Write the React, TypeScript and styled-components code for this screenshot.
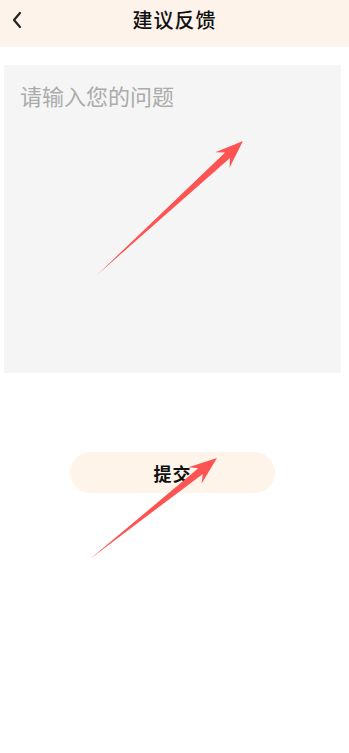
import React from 'react';
import styled, {createGlobalStyle} from 'styled-components';

const GlobalStyle = createGlobalStyle`
  html, body {
    margin: 0;
    padding: 0;
    background: #fff;
    font-family: 'Noto Sans CJK SC', 'Noto Sans', sans-serif;
  }
`;

const Page = styled.div`
  position: relative;
  width: 349px;
  height: 753px;
  background: #fff;
  overflow: hidden;
`;

const Header = styled.div`
  position: relative;
  height: 47px;
  display: flex;
  align-items: center;
  justify-content: center;
  background-color: #fdf3ea;
`;

const BackButton = styled.div`
  position: absolute;
  left: 8px;
  top: 10px;
  width: 18px;
  height: 20px;
  display: flex;
  align-items: center;
  justify-content: center;
`;

const Title = styled.h1`
  margin: 0 0 8px 0;
  font-size: 20px;
  font-weight: 500;
  color: #111;
  letter-spacing: 1px;
`;

const Content = styled.div`
  display: flex;
  flex-direction: column;
  padding: 18px 8px 0 4px;
`;

const Question = styled.textarea`
  box-sizing: border-box;
  width: 100%;
  height: 308px;
  border: none;
  outline: none;
  resize: none;
  padding: 14px 16px;
  background-color: #f5f5f5;
  font-family: 'Noto Sans CJK SC', sans-serif;
  font-size: 22px;
  line-height: 32px;
  color: #333;

  &::placeholder {
    color: #ababab;
  }
`;

const SubmitButton = styled.button`
  align-self: flex-start;
  margin: 79px 0 0 66px;
  width: 205px;
  height: 41px;
  border: none;
  border-radius: 21px;
  background-color: #fef4ea;
  font-family: 'Noto Sans CJK SC', sans-serif;
  font-size: 18px;
  font-weight: 700;
  color: #111;
  letter-spacing: 1px;
`;

const Overlay = styled.svg`
  position: absolute;
  left: 0;
  top: 0;
  pointer-events: none;
`;

type Pt = [number, number];

// annotation arrow: thin tail widening into a barbed head
const arrowPoints = (tail: Pt, tip: Pt) => {
  const dx = tip[0] - tail[0];
  const dy = tip[1] - tail[1];
  const len = Math.hypot(dx, dy);
  const u: Pt = [dx / len, dy / len];
  const n: Pt = [-u[1], u[0]];
  const at = (d: number, w: number): Pt => [
    tip[0] - u[0] * d + n[0] * w,
    tip[1] - u[1] * d + n[1] * w,
  ];
  const pts: Pt[] = [
    tail,
    at(21, 3.6),
    at(28, 10.5),
    tip,
    at(28, -10.5),
    at(21, -3.6),
  ];
  return pts.map(p => p.map(v => v.toFixed(1)).join(',')).join(' ');
};

const App = () => {
  return (
    <>
      <GlobalStyle/>
      <Page>
        <Header>
          <BackButton>
            <svg width="12" height="18" viewBox="0 0 12 18">
              <polyline points="9,2 3,9 9,16" fill="none" stroke="#222" strokeWidth="2.2" strokeLinecap="round" strokeLinejoin="round"/>
            </svg>
          </BackButton>
          <Title>建议反馈</Title>
        </Header>
        <Content>
          <Question placeholder="请输入您的问题"/>
          <SubmitButton>提交</SubmitButton>
        </Content>
        <Overlay width="349" height="753" viewBox="0 0 349 753">
          <polygon points={arrowPoints([97, 275], [243, 141])} fill="#fd5352"/>
          <polygon points={arrowPoints([90, 559], [217, 458])} fill="#fd5352"/>
        </Overlay>
      </Page>
    </>
  );
};

export default App;
